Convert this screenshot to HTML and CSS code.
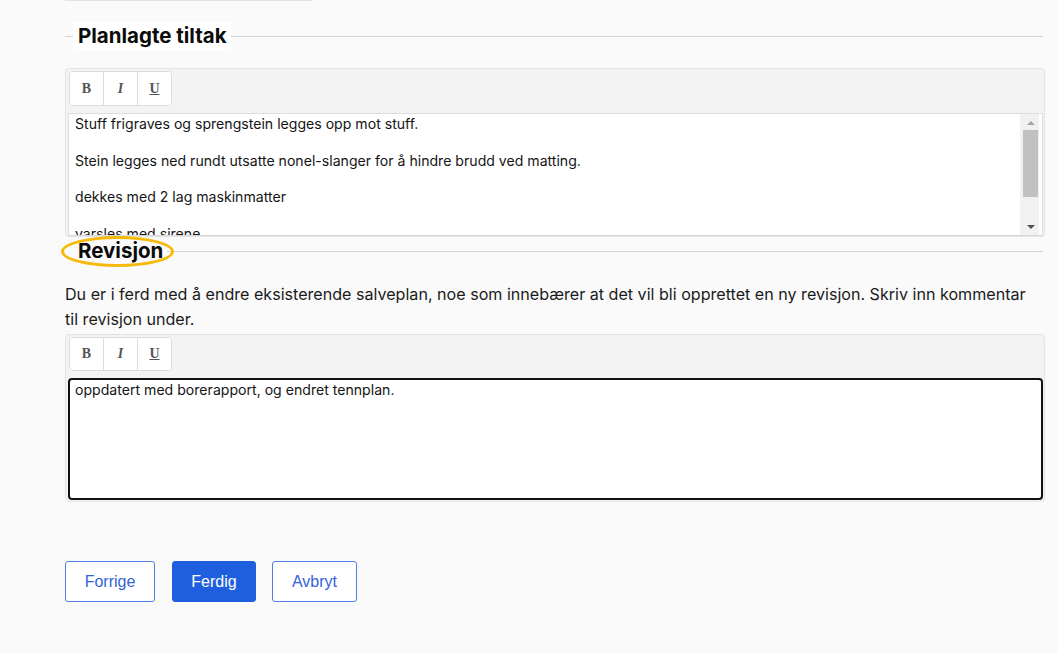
FILE: index.html
```html
<!DOCTYPE html>
<html lang="no">
<head>
<meta charset="utf-8">
<title>Salveplan</title>
<link rel="stylesheet" href="styles.css">
</head>
<body>
<div class="page">
  <div class="top-edge"></div>

  <div class="section-head head-first">
    <span class="line-short"></span>
    <h2 class="title title-white">Planlagte tiltak</h2>
    <span class="line"></span>
  </div>

  <div class="editor">
    <div class="toolbar">
      <button class="tb tb-b">B</button>
      <button class="tb tb-i">I</button>
      <button class="tb tb-u">U</button>
    </div>
    <div class="content content-scroll">
      <div class="text">
        <p>Stuff frigraves og sprengstein legges opp mot stuff.</p>
        <p>Stein legges ned rundt utsatte nonel-slanger for å hindre brudd ved matting.</p>
        <p>dekkes med 2 lag maskinmatter</p>
        <p>varsles med sirene</p>
      </div>
      <div class="scrollbar">
        <span class="arrow-up"></span>
        <span class="thumb"></span>
        <span class="arrow-down"></span>
      </div>
    </div>
  </div>

  <div class="section-head head-second">
    <span class="line-short line-hidden"></span>
    <h2 class="title">Revisjon</h2>
    <span class="line"></span>
    <span class="ring"></span>
  </div>

  <p class="info">Du er i ferd med å endre eksisterende salveplan, noe som innebærer at det vil bli opprettet en ny revisjon. Skriv inn kommentar til revisjon under.</p>

  <div class="editor editor-two">
    <div class="toolbar">
      <button class="tb tb-b">B</button>
      <button class="tb tb-i">I</button>
      <button class="tb tb-u">U</button>
    </div>
    <div class="content content-focus">
      <p>oppdatert med borerapport, og endret tennplan.</p>
    </div>
  </div>

  <div class="actions">
    <button class="btn btn-outline">Forrige</button>
    <button class="btn btn-primary">Ferdig</button>
    <button class="btn btn-outline btn-cancel">Avbryt</button>
  </div>
</div>
</body>
</html>
```

FILE: styles.css
```css
* { box-sizing: border-box; }

html, body {
  margin: 0;
  padding: 0;
  background: #fafafa;
}

body {
  font-family: Inter, "Liberation Sans", Arial, sans-serif;
  color: #111;
  width: 1058px;
  height: 653px;
  overflow: hidden;
}

.page {
  padding-left: 65px;
  width: 1045px;
}

.top-edge {
  width: 247px;
  height: 1px;
  background: #e3e3e3;
}

.section-head {
  position: relative;
  display: flex;
  align-items: center;
  height: 29px;
}

.head-first { margin-top: 21px; }

.line-short {
  width: 8px;
  height: 1px;
  background: #d4d4d4;
}

.line-hidden { background: transparent; }

.line {
  flex: 1;
  height: 1px;
  background: #d4d4d4;
  margin-right: 2px;
}

.title {
  margin: 0;
  padding: 0 4px 1px 5px;
  font-size: 20.5px;
  font-weight: bold;
  line-height: 28px;
  color: #0b0b0b;
}

.title-white { background: #ffffff; }

.ring {
  position: absolute;
  left: -4px;
  top: -1px;
  width: 113px;
  height: 31px;
  border: 3px solid #f6bb0a;
  border-radius: 50%;
}

.editor {
  margin-top: 17px;
  border: 1px solid #e4e4e4;
  border-radius: 4px;
  background: #f3f3f3;
  padding: 2px 0 0 2px;
}

.toolbar {
  display: flex;
  margin-left: 1px;
  width: 103px;
  height: 35px;
  border: 1px solid #dcdcdc;
  border-radius: 4px;
  background: #fff;
  overflow: hidden;
}

.tb {
  flex: 1;
  border: 0;
  border-right: 1px solid #dcdcdc;
  background: #fff;
  font-family: "Liberation Serif", "Times New Roman", serif;
  font-size: 14px;
  font-weight: bold;
  color: #555;
  padding: 0;
}

.tb:last-child { border-right: 0; }
.tb-i { font-style: italic; }
.tb-u { text-decoration: underline; }

.content {
  margin-top: 7px;
  margin-right: 1px;
  background: #fff;
  font-size: 14.1px;
  line-height: 17px;
  color: #151515;
}

.content p { margin: 0; }

.content-scroll {
  display: flex;
  height: 123px;
  border: 1px solid #dedede;
  border-bottom-color: #d8d8d8;
  overflow: hidden;
}

.text {
  flex: 1;
  padding: 1px 0 0 6px;
  overflow: hidden;
}

.text p { margin-bottom: 19.5px; }

.scrollbar {
  width: 19px;
  margin-right: 3px;
  background: #f1f1f1;
  display: flex;
  flex-direction: column;
  align-items: center;
  padding: 7px 0 6px 2px;
}

.arrow-up {
  width: 0;
  height: 0;
  border-left: 4px solid transparent;
  border-right: 4px solid transparent;
  border-bottom: 4px solid #a3a3a3;
}

.thumb {
  margin-top: 5px;
  width: 15px;
  height: 67px;
  background: #c1c1c1;
}

.arrow-down {
  margin-top: auto;
  width: 0;
  height: 0;
  border-left: 4px solid transparent;
  border-right: 4px solid transparent;
  border-top: 4px solid #505050;
}

.info {
  margin: 16px 0 2px;
  font-size: 16.1px;
  line-height: 25px;
  color: #1a1a1a;
  width: 966px;
}

.editor-two {
  margin-top: 0;
  padding-bottom: 1px;
}

.editor-two .toolbar { height: 34px; }

.content-focus {
  height: 122px;
  border: 2px solid #111;
  border-radius: 4px;
  padding: 2px 0 0 5px;
  line-height: 16px;
}

.actions {
  display: flex;
  gap: 16px;
  margin-top: 59px;
}

.btn {
  height: 41px;
  border-radius: 3px;
  font-family: "Liberation Sans", Arial, sans-serif;
  font-size: 16px;
  padding: 0 10px;
}

.btn-outline {
  background: #fff;
  border: 1px solid #4f7fe6;
  color: #3563d8;
  width: 90px;
}

.btn-cancel { width: 85px; }

.btn-primary {
  background: #1f5fdd;
  border: 1px solid #1f5fdd;
  color: #fff;
  width: 84px;
  margin-left: 1px;
}
```
